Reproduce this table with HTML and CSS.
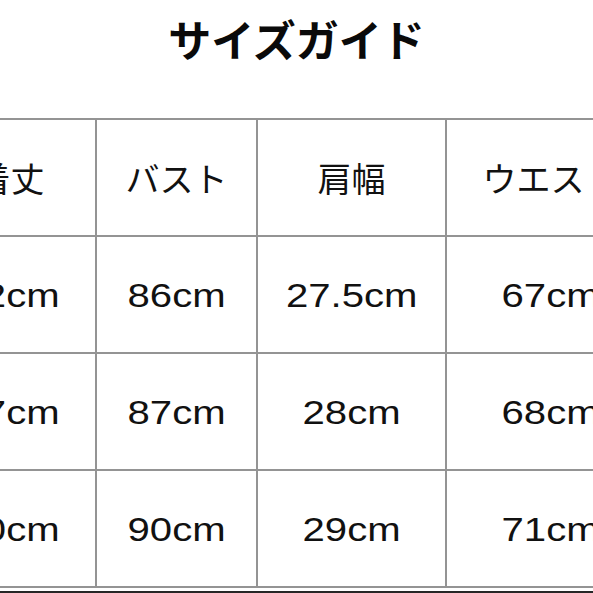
FILE: index.html
```html
<!DOCTYPE html>
<html lang="ja">
<head>
<meta charset="utf-8">
<title>サイズガイド</title>
<link rel="stylesheet" href="styles.css">
</head>
<body>
<div class="page">
  <h1 class="title">サイズガイド</h1>
  <div class="table-wrap">
    <table class="size-table">
      <colgroup>
        <col class="c1"><col class="c2"><col class="c3"><col class="c4">
      </colgroup>
      <tr class="head">
        <th>着丈</th><th>バスト</th><th>肩幅</th><th>ウエスト</th>
      </tr>
      <tr>
        <td><span class="num">62cm</span></td><td><span class="num">86cm</span></td><td><span class="num">27.5cm</span></td><td><span class="num">67cm</span></td>
      </tr>
      <tr>
        <td><span class="num">67cm</span></td><td><span class="num">87cm</span></td><td><span class="num">28cm</span></td><td><span class="num">68cm</span></td>
      </tr>
      <tr>
        <td><span class="num">70cm</span></td><td><span class="num">90cm</span></td><td><span class="num">29cm</span></td><td><span class="num">71cm</span></td>
      </tr>
    </table>
  </div>
  <div class="bottom-rule"></div>
</div>
</body>
</html>
```
FILE: styles.css
```css
html, body {
  margin: 0;
  padding: 0;
  background: #ffffff;
}
.page {
  width: 593px;
  height: 593px;
  overflow: hidden;
  background: #ffffff;
  color: #111111;
}
.title {
  margin: 0;
  padding-top: 17px;
  height: 101px;
  box-sizing: border-box;
  text-align: center;
  font-family: "Noto Sans CJK JP", sans-serif;
  font-weight: 700;
  font-size: 43px;
  line-height: 1;
  color: #0a0a0a;
}
.table-wrap {
  width: 593px;
  overflow: hidden;
  padding-top: 17px;
}
.size-table {
  margin-left: -76px;
  border-collapse: collapse;
  table-layout: fixed;
  width: 730px;
}
.c1 { width: 171px; }
.c2 { width: 161px; }
.c3 { width: 189px; }
.c4 { width: 209px; }
.size-table th,
.size-table td {
  border: 2px solid #949494;
  height: 115px;
  padding: 0;
  text-align: center;
  vertical-align: middle;
  white-space: nowrap;
}
.size-table th {
  font-family: "Noto Sans CJK JP", sans-serif;
  font-weight: 400;
  font-size: 34px;
  line-height: 1;
  color: #111111;
}
.size-table td {
  font-family: "Liberation Sans", Arial, sans-serif;
  font-size: 34px;
  line-height: 1;
  color: #111111;
}
.num {
  display: inline-block;
  transform: scaleX(1.18);
}
.bottom-rule {
  margin-top: 3px;
  height: 3px;
  background: #262626;
}
```
